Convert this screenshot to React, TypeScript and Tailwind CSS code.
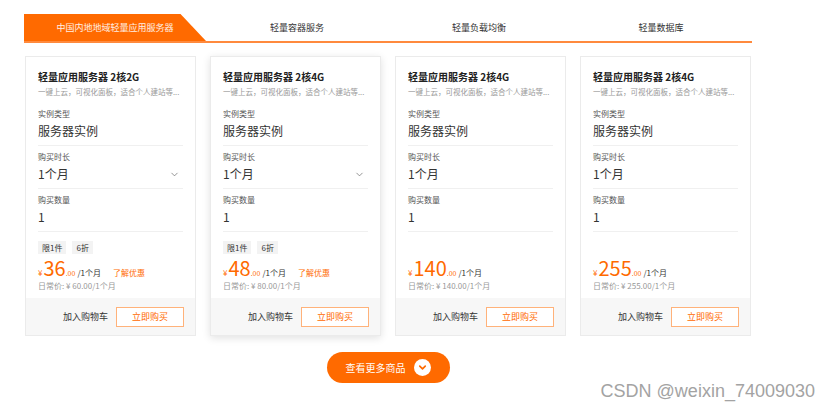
import React from 'react';
import { ChevronDown } from 'lucide-react';

const TABS = ['中国内地地域轻量应用服务器', '轻量容器服务', '轻量负载均衡', '轻量数据库'];

const CARDS = [
  { title: '轻量应用服务器 2核2G', price: '36', regular: '60.00', tags: true, select: true, hover: false },
  { title: '轻量应用服务器 2核4G', price: '48', regular: '80.00', tags: true, select: true, hover: true },
  { title: '轻量应用服务器 2核4G', price: '140', regular: '140.00', tags: false, select: false, hover: false },
  { title: '轻量应用服务器 2核4G', price: '255', regular: '255.00', tags: false, select: false, hover: false },
];

function Field({ label, value, select }: { label: string; value: string; select?: boolean }) {
  return (
    <div className="pt-[4px] pb-[4px] border-b border-[#f0f0f0]">
      <div className="h-[14px] text-[8px] leading-[14px] text-[#555]">{label}</div>
      <div className="h-[20px] flex items-center justify-between text-[12px] text-[#333]">
        <span>{value}</span>
        {select && <ChevronDown className="w-[11px] h-[11px] text-[#666] mr-[3px]" strokeWidth={1.5} />}
      </div>
    </div>
  );
}

function Card({ c }: { c: (typeof CARDS)[number] }) {
  return (
    <div
      className={`w-[171px] h-[280px] flex flex-col bg-white border border-[#ebebeb] ${
        c.hover ? 'shadow-[0_2px_8px_rgba(0,0,0,0.12)]' : ''
      }`}
    >
      <div className="flex-1 px-[12px] pt-[12px]">
        <div className="h-[16px] leading-[16px] text-[10px] font-bold text-[#222]">{c.title}</div>
        <div className="h-[14px] leading-[14px] text-[7.5px] text-[#999] whitespace-nowrap">一键上云，可视化面板，适合个人建站等...</div>
        <div className="mt-[4px]">
          <Field label="实例类型" value="服务器实例" />
          <Field label="购买时长" value="1个月" select={c.select} />
          <Field label="购买数量" value="1" />
        </div>
        <div className="mt-[9px] h-[13px] flex gap-[6px]">
          {c.tags && (
            <>
              <span className="px-[4px] bg-[#f3f3f3] text-[8px] leading-[13px] text-[#333]">限1件</span>
              <span className="px-[4px] bg-[#f3f3f3] text-[8px] leading-[13px] text-[#333]">6折</span>
            </>
          )}
        </div>
        <div className="mt-[4px] h-[20px] flex items-baseline text-[#ff6a00] leading-none">
          <span className="text-[8px] mr-[1px]">¥</span>
          <span className="text-[20px]">{c.price}</span>
          <span className="text-[7px]">.00</span>
          <span className="text-[8px] text-[#333] ml-[2px]">/1个月</span>
          {c.tags && <span className="text-[8px] ml-[12px]">了解优惠</span>}
        </div>
        <div className="mt-[2px] h-[12px] leading-[12px] text-[8px] text-[#999]">日常价: ¥ {c.regular}/1个月</div>
      </div>
      <div className="h-[37px] bg-[#f7f7f7] flex items-center justify-end pr-[11px] gap-[8px]">
        <span className="text-[9px] text-[#333]">加入购物车</span>
        <button className="w-[68px] h-[20px] border border-[#ffb27a] bg-white text-[9px] text-[#ff6a00]">立即购买</button>
      </div>
    </div>
  );
}

export default function App() {
  return (
    <div
      className="relative w-[831px] h-[411px] bg-white overflow-hidden"
      style={{ fontFamily: '"Noto Sans CJK SC", "Noto Sans", sans-serif' }}
    >
      <div className="ml-[24px] w-[728px] pt-[14px]">
        {/* Tabs */}
        <div className="grid grid-cols-4 h-[29px] border-b-2 border-[#ff8a3d]">
          {TABS.map((t, i) => (
            <div key={t} className="relative flex items-center justify-center text-[9px]">
              {i === 0 && (
                <div className="absolute inset-0 bg-[#ff6a00] [clip-path:polygon(0_0,86%_0,100%_100%,0_100%)]" />
              )}
              <span className={`relative ${i === 0 ? 'text-white/90' : 'text-[#333]'}`}>{t}</span>
            </div>
          ))}
        </div>

        {/* Cards */}
        <div className="mt-[13px] pl-[1px] flex gap-[14px]">
          {CARDS.map((c, i) => (
            <Card key={i} c={c} />
          ))}
        </div>

        <div className="mt-[16px] flex justify-center">
          <button className="w-[123px] h-[31px] rounded-full bg-[#ff6a00] flex items-center justify-center gap-[8px]">
            <span className="text-[10px] text-white">查看更多商品</span>
            <span className="w-[17px] h-[17px] rounded-full bg-white flex items-center justify-center">
              <ChevronDown className="w-[11px] h-[11px] text-[#ff6a00]" strokeWidth={3.5} />
            </span>
          </button>
        </div>
      </div>

      <div
        className="absolute right-[16px] top-[378px] text-[18px] text-[#a3a3a3]"
        style={{ fontFamily: '"Liberation Sans", Arial, sans-serif' }}
      >
        CSDN @weixin_74009030
      </div>
    </div>
  );
}
